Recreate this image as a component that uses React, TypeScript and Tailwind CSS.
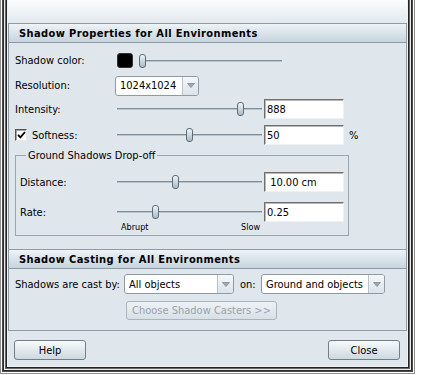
import React from "react";

const font = "font-['DejaVu_Sans_Condensed','DejaVu_Sans',sans-serif]";

function Slider({ pos, className }: { pos: number; className: string }) {
  return (
    <div className={`relative h-[16px] ${className}`}>
      <div className="absolute left-0 right-0 top-[7px] h-px bg-[#7d8d9a]" />
      <div className="absolute left-0 right-0 top-[8px] h-px bg-[#b9c5ce]" />
      <div
        className="absolute top-[1px] w-[7px] h-[14px] rounded-[3px] border border-[#5c6c79] bg-gradient-to-b from-[#f0f4f7] to-[#aab9c6]"
        style={{ left: pos }}
      />
    </div>
  );
}

function Field({ text, className = "" }: { text: string; className?: string }) {
  return (
    <div
      className={`w-[80px] h-[20px] bg-white border border-t-[#6f6f6f] border-l-[#6f6f6f] border-r-[#eef0f2] border-b-[#eef0f2] shadow-[inset_1px_1px_0_#b8b8b8] pl-[2px] flex items-center whitespace-pre text-black ${className}`}
    >
      {text}
    </div>
  );
}

function Dropdown({ text, className }: { text: string; className: string }) {
  return (
    <div
      className={`flex h-[20px] rounded-[3px] border border-[#8d9ba6] bg-white overflow-hidden ${className}`}
    >
      <div className="flex-1 pl-[4px] flex items-center text-black">{text}</div>
      <div className="w-[16px] border-l border-[#b7c2cb] bg-gradient-to-b from-[#f6f8fa] to-[#dbe3e9] flex items-center justify-center">
        <svg width="8" height="5" viewBox="0 0 8 5">
          <path d="M0.5 0.5h7L4 4.5z" fill="#9aa8b3" stroke="#7f8e9a" strokeWidth="0.8" />
        </svg>
      </div>
    </div>
  );
}

function Header({ text }: { text: string }) {
  return (
    <div className="h-[20px] border-t border-b border-[#8d9ca7] bg-gradient-to-b from-[#eef3f6] to-[#c7d4de] flex items-center pl-[10px] font-bold tracking-[0.4px] text-black">
      {text}
    </div>
  );
}

export default function App() {
  return (
    <div className={`w-[425px] h-[375px] bg-white overflow-hidden text-[11px] leading-[13px] text-black ${font}`}>
      <div className="w-[415px] h-[374px] border-l border-r border-b border-[#8e8e8e]">
        <div className="h-full border-l border-r border-b border-white">
          <div className="h-full border-l border-r border-b border-[#4a4a4a]">
            <div className="h-full border-l border-r border-b border-[#2c2c2c]">
              <div className="h-full border-l border-r border-b border-[#ececec]">
                <div className="h-full border-l border-r border-b border-[#666666]">
                  <div className="h-full border-l border-r border-b border-[#222222]">
                    <div className="h-full border-l border-r border-b border-[#f2f2f2]">
                      <div className="h-full flex flex-col bg-[#dfe6ec]">
                        {/* top strip */}
                        <div className="h-[23px] bg-gradient-to-b from-[#fbfcfd] to-[#e3e9ee]" />
                        {/* panel */}
                        <div className="flex-1 flex flex-col border-l border-r border-b border-[#8d9ca7]">
                          <Header text="Shadow Properties for All Environments" />
                          <div className="flex flex-col pl-[6px]">
                            <div className="mt-[9px] h-[17px] flex items-center">
                              <div className="w-[102px]">Shadow color:</div>
                              <div className="w-[16px] h-[15px] rounded-[3px] bg-black border border-[#333]" />
                              <Slider pos={0} className="ml-[6px] w-[143px]" />
                            </div>
                            <div className="mt-[7px] h-[19px] flex items-center">
                              <div className="w-[100px]">Resolution:</div>
                              <Dropdown text="1024x1024" className="w-[84px] h-[19px]" />
                            </div>
                            <div className="mt-[4px] h-[20px] flex items-center">
                              <div className="w-[102px]">Intensity:</div>
                              <Slider pos={120} className="w-[145px]" />
                              <Field text="888" className="ml-[2px]" />
                            </div>
                            <div className="mt-[6px] h-[20px] flex items-center">
                              <div className="w-[102px] flex items-center">
                                <div className="w-[12px] h-[12px] bg-white border border-t-[#555] border-l-[#555] border-r-[#e8e8e8] border-b-[#e8e8e8] shadow-[inset_1px_1px_0_#a8a8a8] flex items-center justify-center">
                                  <svg width="9" height="8" viewBox="0 0 9 8">
                                    <path d="M1 3.8 L3.4 6.4 L8 1" fill="none" stroke="#000" strokeWidth="1.8" />
                                  </svg>
                                </div>
                                <span className="ml-[5px]">Softness:</span>
                              </div>
                              <Slider pos={69} className="w-[145px]" />
                              <Field text="50" className="ml-[2px]" />
                              <span className="ml-[5px]">%</span>
                            </div>
                            <fieldset className="mt-[4px] w-[334px] border border-[#9aa6af] pl-[4px] pr-[3px] pb-[2px]">
                              <legend className="ml-[6px] px-[2px] leading-[13px]">Ground Shadows Drop-off</legend>
                              <div className="mt-[10px] h-[20px] flex items-center">
                                <div className="w-[97px]">Distance:</div>
                                <Slider pos={55} className="w-[145px]" />
                                <Field text=" 10.00 cm" className="ml-[2px]" />
                              </div>
                              <div className="mt-[10px] h-[20px] flex items-center">
                                <div className="w-[97px]">Rate:</div>
                                <Slider pos={35} className="w-[145px]" />
                                <Field text="0.25" className="ml-[2px]" />
                              </div>
                              <div className="h-[11px] flex items-center">
                                <div className="ml-[101px] w-[139px] flex justify-between text-[9px] leading-[11px]">
                                  <span>Abrupt</span>
                                  <span>Slow</span>
                                </div>
                              </div>
                            </fieldset>
                          </div>
                          <div className="mt-[13px]">
                            <Header text="Shadow Casting for All Environments" />
                          </div>
                          <div className="flex flex-col pl-[6px]">
                            <div className="mt-[5px] h-[20px] flex items-center">
                              <div className="w-[109px]">Shadows are cast by:</div>
                              <Dropdown text="All objects" className="w-[110px]" />
                              <span className="ml-[6px] w-[21px]">on:</span>
                              <Dropdown text="Ground and objects" className="w-[124px]" />
                            </div>
                            <div className="mt-[7px] flex">
                              <div className="ml-[111px] w-[151px] h-[19px] rounded-[3px] border border-[#a9b5be] bg-gradient-to-b from-[#eef2f5] to-[#d8e0e6] text-[#97a2ab] flex items-center justify-center">
                                Choose Shadow Casters &gt;&gt;
                              </div>
                            </div>
                          </div>
                        </div>
                        {/* footer */}
                        <div className="h-[35px] flex items-start justify-between pt-[9px] pl-[6px] pr-[7px]">
                          <div className="w-[72px] h-[20px] rounded-[3px] border border-[#6f7f8b] bg-gradient-to-b from-[#f8fafb] to-[#cdd8e0] flex items-center justify-center">
                            Help
                          </div>
                          <div className="w-[72px] h-[20px] rounded-[3px] border border-[#6f7f8b] bg-gradient-to-b from-[#f8fafb] to-[#cdd8e0] flex items-center justify-center">
                            Close
                          </div>
                        </div>
                      </div>
                    </div>
                  </div>
                </div>
              </div>
            </div>
          </div>
        </div>
      </div>
    </div>
  );
}
